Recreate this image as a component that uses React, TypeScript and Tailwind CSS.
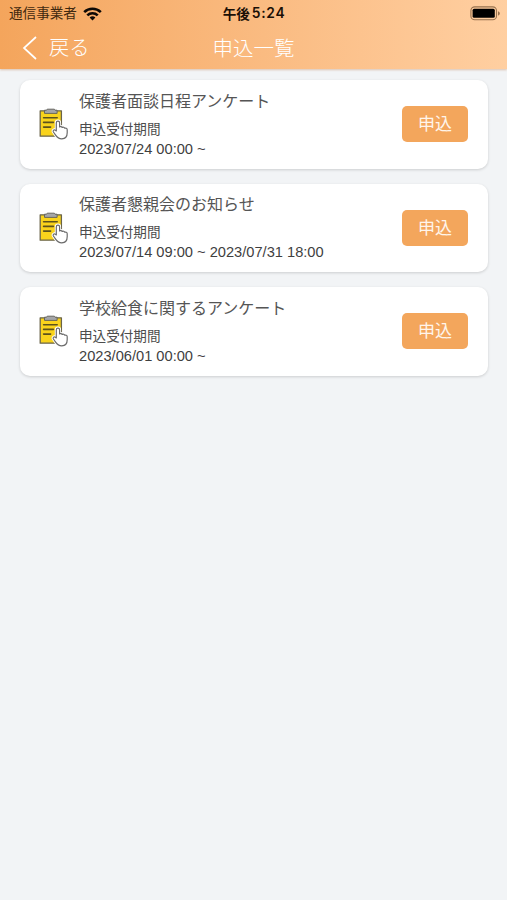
const items = [
  { title: '保護者面談日程アンケート', period: '2023/07/24 00:00 ~' },
  { title: '保護者懇親会のお知らせ', period: '2023/07/14 09:00 ~ 2023/07/31 18:00' },
  { title: '学校給食に関するアンケート', period: '2023/06/01 00:00 ~' },
];

function WifiIcon() {
  return (
    <svg width="19" height="14" viewBox="0 0 19 14" fill="none" stroke="#0d0906" strokeWidth="2.6">
      <path d="M1.2 5.1a12 12 0 0 1 16.6 0" />
      <path d="M4.3 8.4a7.5 7.5 0 0 1 10.4 0" />
      <path d="M9.5 13.5 6.6 10.6a4.2 4.2 0 0 1 5.8 0Z" fill="#0d0906" stroke="none" />
    </svg>
  );
}

function BatteryIcon() {
  return (
    <svg width="31" height="15" viewBox="0 0 31 15">
      <rect x="0.9" y="0.9" width="25.6" height="12.8" rx="3.8" fill="none" stroke="#97724f" strokeWidth="1.1" />
      <rect x="2.6" y="2.8" width="22.2" height="9" rx="1.5" fill="#000" />
      <path d="M28 5.2c2.4.8 2.4 3.6 0 4.4Z" fill="#97724f" />
    </svg>
  );
}

const handPath =
  'M17.3 22.9V14.9c0-2.4 3.3-2.4 3.3 0v4.1c.7-.8 2.3-.6 2.6.5.8-.6 2.2-.3 2.4.7 1-.4 2.6.2 2.6 1.5v3.1c0 3.6-2.1 6-5.4 6-3 0-4.7-1.3-6-3.4l-2.4-3.4c-.9-1.6.8-2.9 2-1.7Z';

function ClipboardIcon() {
  return (
    <svg width="30" height="32" viewBox="0 0 30 32" strokeLinejoin="round" strokeLinecap="round">
      <rect x="1.2" y="2.8" width="21.2" height="25.4" fill="#f9d31c" stroke="#6a644a" strokeWidth="1.3" />
      <path d="M5.5 5V2.2h2L8.2 1.2h7.2l.7 1h2V5Z" fill="#a5a6a8" stroke="#66655f" strokeWidth="1" />
      <path d="M4.6 9.7h13.6M4.6 14.4h9.8M4.6 19.1h7" fill="none" stroke="#5c521c" strokeWidth="1.6" />
      <path d={handPath} fill="#fff" stroke="#fff" strokeWidth="3" />
      <path d={handPath} fill="#fff" stroke="#6b6b6b" strokeWidth="1.2" />
    </svg>
  );
}

export default function App() {
  return (
    <div className="h-[900px] w-[507px] overflow-hidden bg-[#f2f4f6] font-['Liberation_Sans','Noto_Sans_CJK_JP',sans-serif]">
      <header className="h-[69px] bg-linear-to-r from-[#f4a55c] to-[#ffcfa1] shadow-[0_1px_2px_rgba(190,120,70,0.4)]">
        <div className="grid h-[27px] grid-cols-3 items-center pr-[6px] pl-[9px]">
          <div className="flex items-center gap-[6px]">
            <span className="text-[13.6px] leading-[27px] text-[#41290f]">通信事業者</span>
            <WifiIcon />
          </div>
          <div className="flex items-center justify-center gap-[2px] pr-[2px] text-[#1a0f06]">
            <span className="font-['Noto_Sans_CJK_JP',sans-serif] text-[13.6px] leading-[27px] font-bold">午後</span>
            <span className="font-['Inter',sans-serif] text-[13.8px] leading-[27px] font-semibold tracking-[0.7px]">5:24</span>
          </div>
          <div className="flex justify-end">
            <BatteryIcon />
          </div>
        </div>
        <div className="grid h-[42px] grid-cols-3 items-center px-[22px]">
          <button className="flex items-center gap-[12px] text-white">
            <svg width="15" height="24" viewBox="0 0 15 24" fill="none" stroke="currentColor" strokeWidth="1.7">
              <path d="M14 1 2 12l12 11" />
            </svg>
            <span className="text-[20.3px] leading-[42px] font-light">戻る</span>
          </button>
          <h1 className="pt-[2px] text-center text-[20.5px] leading-[40px] font-light whitespace-nowrap text-white">申込一覧</h1>
        </div>
      </header>
      <main className="flex flex-col gap-[15px] pt-[11px] pr-[19px] pl-[20px]">
        {items.map((item) => (
          <article
            key={item.title}
            className="flex h-[88.5px] items-center rounded-[10px] bg-white pr-[20px] pl-[19px] shadow-[0_1px_3px_rgba(0,0,0,0.16)]"
          >
            <ClipboardIcon />
            <div className="ml-[10px] flex-1 text-[#3f3f3f]">
              <h2 className="text-[16px] leading-[26px] font-normal text-[#555]">{item.title}</h2>
              <p className="mt-[5px] text-[13.6px] leading-[20px] text-[#4c4c4c]">申込受付期間</p>
              <p className="-mt-px mb-px text-[14.65px] leading-[20px] whitespace-nowrap">{item.period}</p>
            </div>
            <button className="h-[36px] w-[66px] rounded-[5px] bg-[#f3a65c] pt-px text-[17px] leading-[36px] text-[#fff5eb]">申込</button>
          </article>
        ))}
      </main>
    </div>
  );
}
